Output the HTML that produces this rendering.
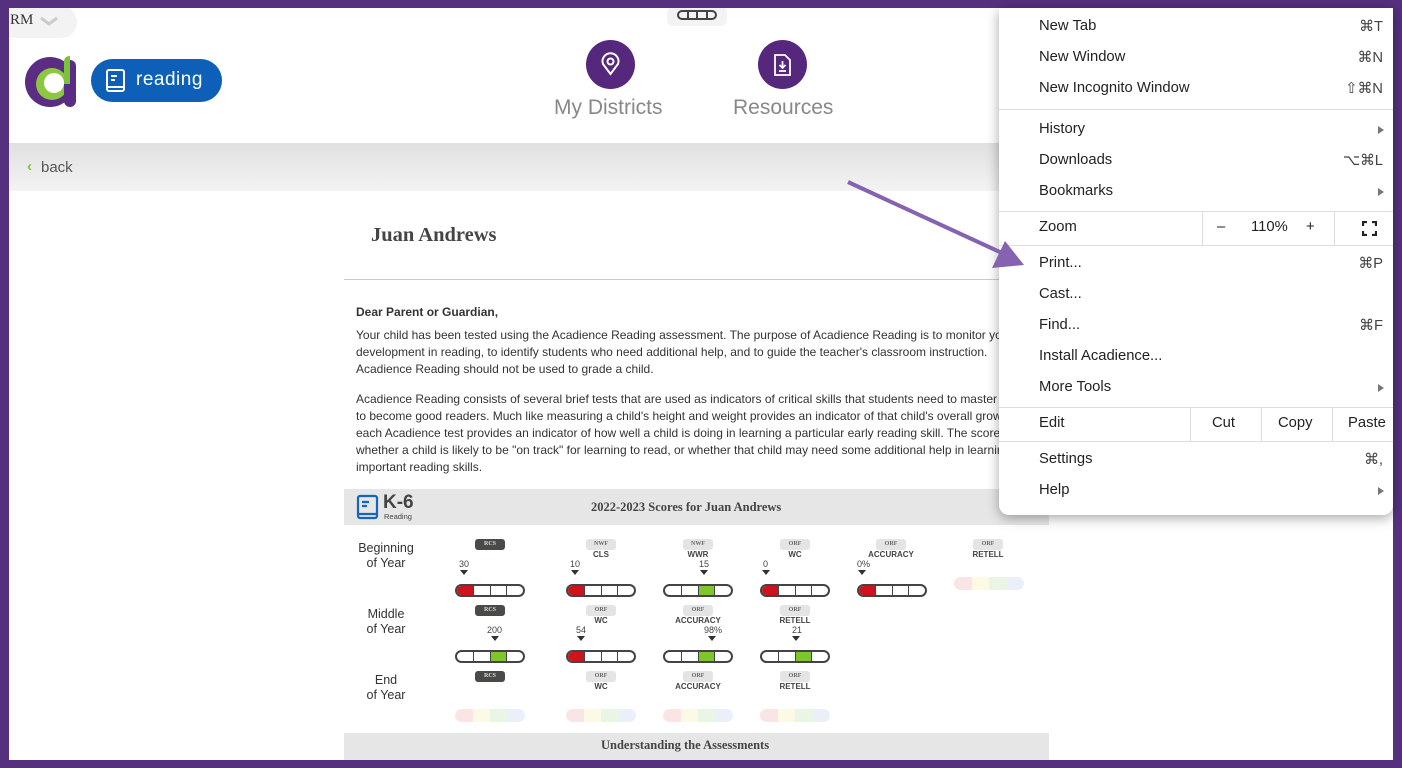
<!DOCTYPE html>
<html><head><meta charset="utf-8"><style>
*{margin:0;padding:0;box-sizing:border-box}
body{width:1402px;height:768px;overflow:hidden;background:#55307f;font-family:"Liberation Sans",sans-serif;position:relative}
#page{position:absolute;left:9px;top:8px;width:1384px;height:752px;background:#fff;overflow:hidden}
.abs{position:absolute}
.p{font-size:12px;color:#333;line-height:17px;white-space:nowrap}
.bar{position:absolute;width:70px;height:13px;border:2px solid #444;border-radius:7px;display:flex;overflow:hidden;background:#fff}
.bar div{flex:1;border-left:1.5px solid #444}
.bar div:first-child{border-left:none}
.ghost{position:absolute;width:70px;height:13px;border-radius:7px;display:flex;overflow:hidden;opacity:.6}
.ghost div{flex:1}
.tag{position:absolute;width:30px;height:11px;border-radius:3px;background:#e4e4e4;font-size:6px;font-weight:bold;color:#666;text-align:center;line-height:11px;font-family:"Liberation Serif",serif}
.tag.dk{background:#4a4a48;color:#ddd}
.lbl{position:absolute;font-size:8px;font-weight:bold;color:#444;text-align:center;width:80px}
.num{position:absolute;font-size:9px;color:#444}
.tri{position:absolute;width:0;height:0;border-left:4px solid transparent;border-right:4px solid transparent;border-top:5px solid #333}
.yr{position:absolute;font-size:12.5px;color:#333;text-align:center;width:80px;line-height:15px}
#menu{position:absolute;left:999px;top:8px;width:394px;height:507px;background:#fff;border-radius:0 0 10px 10px;box-shadow:0 3px 12px rgba(0,0,0,.35);font-size:14.8px;color:#222}
.mi{position:absolute;left:40px}
.sc{position:absolute;right:10px;color:#444}
.ar{position:absolute;right:9px;width:0;height:0;border-top:4px solid transparent;border-bottom:4px solid transparent;border-left:6px solid #777}
.sep{position:absolute;left:0;right:0;height:1px;background:#ddd}
.vs{position:absolute;width:1px;background:#ddd}
</style></head><body>
<div id="page">
 <div class="abs" style="left:-10px;top:-2px;width:78px;height:32px;background:#f3f3f3;border-radius:16px"></div>
 <div class="abs" style="left:1px;top:4px;font-family:'Liberation Serif',serif;font-size:15px;color:#333">RM</div>
 <svg class="abs" style="left:30px;top:8px" width="20" height="10"><path d="M2 2 L10 8 L18 2" stroke="#ccc" stroke-width="3" fill="none"/></svg>
 <!-- logo -->
 <svg class="abs" style="left:15px;top:46px" width="56" height="54" viewBox="0 0 56 54">
  <circle cx="26" cy="28" r="25" fill="#5a2c84"/>
  <circle cx="28" cy="30" r="16" fill="#8dc63f"/>
  <circle cx="30" cy="29" r="10" fill="#fff"/>
  <rect x="40" y="6" width="12" height="47" rx="6" fill="#5a2c84"/>
  <path d="M40 30 L40 8 Q40 2 46 2 L46 30 Z" fill="#7cc23a"/>
 </svg>
 <div class="abs" style="left:82px;top:51px;width:131px;height:43px;background:#0e5fb8;border-radius:22px"></div>
 <svg class="abs" style="left:96px;top:60px" width="22" height="26" viewBox="0 0 22 26"><rect x="2" y="2" width="17" height="21" rx="2" fill="none" stroke="#fff" stroke-width="2"/><path d="M2 19 H19 M6 8 H12 M6 12 H10" stroke="#fff" stroke-width="2"/></svg>
 <div class="abs" style="left:127px;top:61px;font-size:19px;color:#fff;letter-spacing:.5px">reading</div>
 <div class="abs" style="left:658px;top:-2px;width:60px;height:20px;background:#f3f3f3;border-radius:6px"></div>
 <div class="abs" style="left:668px;top:2px;width:40px;height:10px;border:2px solid #444;border-radius:6px;display:flex"><div style="flex:1;border-right:2px solid #444"></div><div style="flex:1;border-right:2px solid #444"></div><div style="flex:1;border-right:2px solid #444"></div><div style="flex:1"></div></div>
 <div class="abs" style="left:577px;top:32px;width:49px;height:49px;border-radius:50%;background:#55287d"></div>
 <svg class="abs" style="left:589px;top:44px" width="25" height="25" viewBox="0 0 25 25"><path d="M12.5 22 L5 12 A8 8 0 1 1 20 12 Z" fill="none" stroke="#fff" stroke-width="2"/><circle cx="12.5" cy="9.5" r="3" fill="none" stroke="#fff" stroke-width="2"/></svg>
 <div class="abs" style="left:545px;top:88px;font-size:21px;color:#888">My Districts</div>
 <div class="abs" style="left:749px;top:32px;width:49px;height:49px;border-radius:50%;background:#55287d"></div>
 <svg class="abs" style="left:763px;top:45px" width="21" height="24" viewBox="0 0 21 24"><path d="M3 2 H13 L18 7 V22 H3 Z" fill="none" stroke="#fff" stroke-width="1.8"/><path d="M10.5 8 V15 M7.5 12 L10.5 15 L13.5 12 M7 18 H14" stroke="#fff" stroke-width="1.8" fill="none"/></svg>
 <div class="abs" style="left:724px;top:88px;font-size:21px;color:#888">Resources</div>
 <div class="abs" style="left:0;top:135px;width:1384px;height:48px;background:linear-gradient(#e0e0e0,#f3f3f3)"></div>
 <div class="abs" style="left:18px;top:150px;font-size:15px;color:#7cc23a;font-weight:bold">‹</div>
 <div class="abs" style="left:32px;top:151px;font-size:15px;color:#555">back</div>
 <div class="abs" style="left:362px;top:216px;font-family:'Liberation Serif',serif;font-weight:bold;font-size:20.5px;color:#444">Juan Andrews</div>
 <div class="abs" style="left:335px;top:271px;width:700px;height:1px;background:#ccc"></div>
 <div class="abs p" style="left:347px;top:296px;font-weight:bold">Dear Parent or Guardian,</div>
 <div class="abs p" style="left:347px;top:319px">Your child has been tested using the Acadience Reading assessment. The purpose of Acadience Reading is to monitor your child's<br>development in reading, to identify students who need additional help, and to guide the teacher's classroom instruction.<br>Acadience Reading should not be used to grade a child.</div>
 <div class="abs p" style="left:347px;top:383px">Acadience Reading consists of several brief tests that are used as indicators of critical skills that students need to master in order<br>to become good readers. Much like measuring a child's height and weight provides an indicator of that child's overall growth,<br>each Acadience test provides an indicator of how well a child is doing in learning a particular early reading skill. The scores show<br>whether a child is likely to be "on track" for learning to read, or whether that child may need some additional help in learning<br>important reading skills.</div>
 <div class="abs" style="left:335px;top:481px;width:705px;height:36px;background:#e6e6e6"></div>
 <svg class="abs" style="left:347px;top:486px" width="24" height="27" viewBox="0 0 24 27"><rect x="2" y="2" width="19" height="22" rx="2" fill="none" stroke="#1565c0" stroke-width="2.2"/><path d="M2 20 H21 M6 8 H13 M6 12 H11" stroke="#1565c0" stroke-width="2.2"/></svg>
 <div class="abs" style="left:374px;top:484px;font-size:19px;font-weight:bold;color:#444">K-6</div>
 <div class="abs" style="left:375px;top:504px;font-size:7.5px;color:#444">Reading</div>
 <div class="abs" style="left:582px;top:492px;font-family:'Liberation Serif',serif;font-weight:bold;font-size:12.5px;color:#444">2022-2023 Scores for Juan Andrews</div>
 <div class="yr" style="left:337px;top:533px">Beginning<br>of Year</div>
 <div class="yr" style="left:337px;top:599px">Middle<br>of Year</div>
 <div class="yr" style="left:337px;top:665px">End<br>of Year</div>
 <div class="tag dk" style="left:466px;top:531px">RCS</div>
 <div class="num" style="left:450px;top:551px">30</div><div class="tri" style="left:451px;top:562px"></div>
 <div class="bar" style="left:446px;top:576px"><div style="background:#d0121b"></div><div></div><div></div><div></div></div>
 <div class="tag" style="left:577px;top:531px">NWF</div><div class="lbl" style="left:552px;top:542px">CLS</div>
 <div class="num" style="left:561px;top:551px">10</div><div class="tri" style="left:562px;top:562px"></div>
 <div class="bar" style="left:557px;top:576px"><div style="background:#d0121b"></div><div></div><div></div><div></div></div>
 <div class="tag" style="left:674px;top:531px">NWF</div><div class="lbl" style="left:649px;top:542px">WWR</div>
 <div class="num" style="left:690px;top:551px">15</div><div class="tri" style="left:691px;top:562px"></div>
 <div class="bar" style="left:654px;top:576px"><div></div><div></div><div style="background:#7cc82c"></div><div></div></div>
 <div class="tag" style="left:771px;top:531px">ORF</div><div class="lbl" style="left:746px;top:542px">WC</div>
 <div class="num" style="left:754px;top:551px">0</div><div class="tri" style="left:753px;top:562px"></div>
 <div class="bar" style="left:751px;top:576px"><div style="background:#d0121b"></div><div></div><div></div><div></div></div>
 <div class="tag" style="left:867px;top:531px">ORF</div><div class="lbl" style="left:842px;top:542px">ACCURACY</div>
 <div class="num" style="left:848px;top:551px">0%</div><div class="tri" style="left:849px;top:562px"></div>
 <div class="bar" style="left:848px;top:576px"><div style="background:#d0121b"></div><div></div><div></div><div></div></div>
 <div class="tag" style="left:964px;top:531px">ORF</div><div class="lbl" style="left:939px;top:542px">RETELL</div>
 <div class="ghost" style="left:945px;top:569px"><div style="background:#f6d5d5"></div><div style="background:#fbf6d4"></div><div style="background:#def0d4"></div><div style="background:#dde6f6"></div></div>
 <div class="tag dk" style="left:466px;top:597px">RCS</div>
 <div class="num" style="left:478px;top:617px">200</div><div class="tri" style="left:482px;top:628px"></div>
 <div class="bar" style="left:446px;top:642px"><div></div><div></div><div style="background:#7cc82c"></div><div></div></div>
 <div class="tag" style="left:577px;top:597px">ORF</div><div class="lbl" style="left:552px;top:608px">WC</div>
 <div class="num" style="left:567px;top:617px">54</div><div class="tri" style="left:568px;top:628px"></div>
 <div class="bar" style="left:557px;top:642px"><div style="background:#d0121b"></div><div></div><div></div><div></div></div>
 <div class="tag" style="left:674px;top:597px">ORF</div><div class="lbl" style="left:649px;top:608px">ACCURACY</div>
 <div class="num" style="left:695px;top:617px">98%</div><div class="tri" style="left:699px;top:628px"></div>
 <div class="bar" style="left:654px;top:642px"><div></div><div></div><div style="background:#7cc82c"></div><div></div></div>
 <div class="tag" style="left:771px;top:597px">ORF</div><div class="lbl" style="left:746px;top:608px">RETELL</div>
 <div class="num" style="left:783px;top:617px">21</div><div class="tri" style="left:783px;top:628px"></div>
 <div class="bar" style="left:751px;top:642px"><div></div><div></div><div style="background:#7cc82c"></div><div></div></div>
 <div class="tag dk" style="left:466px;top:663px">RCS</div>
 <div class="tag" style="left:577px;top:663px">ORF</div><div class="lbl" style="left:552px;top:674px">WC</div>
 <div class="tag" style="left:674px;top:663px">ORF</div><div class="lbl" style="left:649px;top:674px">ACCURACY</div>
 <div class="tag" style="left:771px;top:663px">ORF</div><div class="lbl" style="left:746px;top:674px">RETELL</div>
 <div class="ghost" style="left:446px;top:701px"><div style="background:#f6d5d5"></div><div style="background:#fbf6d4"></div><div style="background:#def0d4"></div><div style="background:#dde6f6"></div></div>
 <div class="ghost" style="left:557px;top:701px"><div style="background:#f6d5d5"></div><div style="background:#fbf6d4"></div><div style="background:#def0d4"></div><div style="background:#dde6f6"></div></div>
 <div class="ghost" style="left:654px;top:701px"><div style="background:#f6d5d5"></div><div style="background:#fbf6d4"></div><div style="background:#def0d4"></div><div style="background:#dde6f6"></div></div>
 <div class="ghost" style="left:751px;top:701px"><div style="background:#f6d5d5"></div><div style="background:#fbf6d4"></div><div style="background:#def0d4"></div><div style="background:#dde6f6"></div></div>
 <div class="abs" style="left:335px;top:725px;width:705px;height:30px;background:#e6e6e6"></div>
 <div class="abs" style="left:592px;top:730px;font-family:'Liberation Serif',serif;font-weight:bold;font-size:12.5px;color:#444">Understanding the Assessments</div>
</div>
<div id="menu">
 <div class="mi" style="top:10px">New Tab</div><div class="sc" style="top:10px">⌘T</div>
 <div class="mi" style="top:41px">New Window</div><div class="sc" style="top:41px">⌘N</div>
 <div class="mi" style="top:72px">New Incognito Window</div><div class="sc" style="top:72px">⇧⌘N</div>
 <div class="sep" style="top:101px"></div>
 <div class="mi" style="top:113px">History</div><div class="ar" style="top:118px"></div>
 <div class="mi" style="top:144px">Downloads</div><div class="sc" style="top:144px">⌥⌘L</div>
 <div class="mi" style="top:175px">Bookmarks</div><div class="ar" style="top:180px"></div>
 <div class="sep" style="top:203px"></div>
 <div class="mi" style="top:211px">Zoom</div>
 <div class="vs" style="left:203px;top:203px;height:34px"></div>
 <div class="abs" style="left:218px;top:211px">–</div>
 <div class="abs" style="left:252px;top:211px">110%</div>
 <div class="abs" style="left:307px;top:211px">+</div>
 <div class="vs" style="left:335px;top:203px;height:34px"></div>
 <svg class="abs" style="left:363px;top:213px" width="15" height="15"><path d="M1 5 V1 H5 M10 1 H14 V5 M14 10 V14 H10 M5 14 H1 V10" stroke="#222" stroke-width="2.2" fill="none"/></svg>
 <div class="sep" style="top:237px"></div>
 <div class="mi" style="top:247px">Print...</div><div class="sc" style="top:247px">⌘P</div>
 <div class="mi" style="top:278px">Cast...</div>
 <div class="mi" style="top:309px">Find...</div><div class="sc" style="top:309px">⌘F</div>
 <div class="mi" style="top:340px">Install Acadience...</div>
 <div class="mi" style="top:371px">More Tools</div><div class="ar" style="top:376px"></div>
 <div class="sep" style="top:399px"></div>
 <div class="mi" style="top:407px">Edit</div>
 <div class="vs" style="left:191px;top:399px;height:34px"></div>
 <div class="abs" style="left:213px;top:407px">Cut</div>
 <div class="vs" style="left:262px;top:399px;height:34px"></div>
 <div class="abs" style="left:279px;top:407px">Copy</div>
 <div class="vs" style="left:333px;top:399px;height:34px"></div>
 <div class="abs" style="left:349px;top:407px">Paste</div>
 <div class="sep" style="top:433px"></div>
 <div class="mi" style="top:443px">Settings</div><div class="sc" style="top:443px">⌘,</div>
 <div class="mi" style="top:474px">Help</div><div class="ar" style="top:479px"></div>
</div>
<svg class="abs" style="left:0;top:0;pointer-events:none" width="1402" height="768"><path d="M848 182 L1002 253" stroke="#8663b0" stroke-width="4"/><path d="M1024 265 L992 268 L1005 241 Z" fill="#8663b0"/></svg>
</body></html>
